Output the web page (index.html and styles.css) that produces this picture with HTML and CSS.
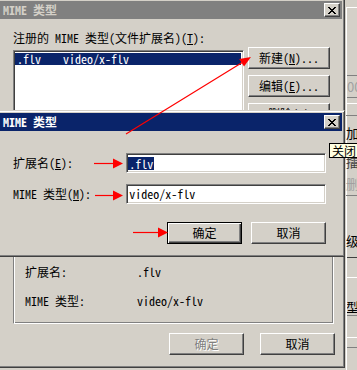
FILE: index.html
```html
<!DOCTYPE html>
<html lang="zh-CN">
<head>
  <meta charset="UTF-8">
  <link rel="stylesheet" href="styles.css">
  <title>MIME 类型</title>
</head>
<body>
<div class="desk">
  <div class="win main">
    <div class="titlebar inactive">
      <span>MIME 类型</span>
      <span class="xbtn">
        <svg width="8" height="7" viewBox="0 0 8 7"><path d="M0 0h2v1H0zM6 0h2v1H6zM1 1h2v1H1zM5 1h2v1H5zM2 2h4v1H2zM3 3h2v1H3zM2 4h4v1H2zM1 5h2v1H1zM5 5h2v1H5zM0 6h2v1H0zM6 6h2v1H6z" fill="#000"/></svg>
      </span>
    </div>
    <div class="main-body">
      <div class="top-row">
        <div class="list-col">
          <div class="lbl">注册的 MIME 类型(文件扩展名)(<u>T</u>):</div>
          <div class="listbox">
            <div class="list-row sel"><span class="ext">.flv</span><span>video/x-flv</span></div>
          </div>
        </div>
        <div class="btn-col">
          <div class="btn">新建(<u>N</u>)...</div>
          <div class="btn">编辑(<u>E</u>)...</div>
          <div class="btn">删除(<u>R</u>)</div>
        </div>
      </div>
      <div class="groupbox">
        <div class="detail"><span class="dlabel">扩展名:</span><span>.flv</span></div>
        <div class="detail second"><span class="dlabel">MIME 类型:</span><span>video/x-flv</span></div>
      </div>
      <div class="foot">
        <div class="btn wide disabled">确定</div>
        <div class="btn wide">取消</div>
      </div>
    </div>
  </div>

  <div class="backwin">
    <div class="bw-frame">
      <div class="bw a"></div>
      <div class="bw b"><span class="dim">00</span></div>
      <div class="bw c"></div>
      <div class="bw d"></div>
      <div class="bw e">加</div>
      <div class="bw f"><span class="bw-t1">擂</span><span class="dim bw-t2">删</span></div>
      <div class="bw g">级</div>
      <div class="bw h"></div>
      <div class="bw i"><span class="cut">类型</span></div>
      <div class="bw j"></div>
      <div class="bw k"></div>
      <div class="bw l"></div>
    </div>
  </div>
</div>

<div class="win dlg">
  <div class="titlebar active">
    <span>MIME 类型</span>
    <span class="xbtn">
      <svg width="8" height="7" viewBox="0 0 8 7"><path d="M0 0h2v1H0zM6 0h2v1H6zM1 1h2v1H1zM5 1h2v1H5zM2 2h4v1H2zM3 3h2v1H3zM2 4h4v1H2zM1 5h2v1H1zM5 5h2v1H5zM0 6h2v1H0zM6 6h2v1H6z" fill="#000"/></svg>
    </span>
  </div>
  <div class="dlg-body">
    <div class="frow">
      <span class="flabel">扩展名(<u>E</u>):</span>
      <div class="edit"><span class="selected">.flv</span></div>
    </div>
    <div class="frow second">
      <span class="flabel">MIME 类型(<u>M</u>):</span>
      <div class="edit">video/x-flv</div>
    </div>
    <div class="dlg-foot">
      <div class="btn wide default">确定</div>
      <div class="btn wide">取消</div>
    </div>
  </div>
</div>

<div class="tooltip">关闭</div>

<svg class="marks" width="357" height="370" viewBox="0 0 357 370">
  <g stroke="#ff0000" stroke-width="1.2" fill="none">
    <line x1="94" y1="163.5" x2="115" y2="163.5"/>
    <line x1="95" y1="195.5" x2="115" y2="195.5"/>
    <line x1="133" y1="232.5" x2="160" y2="232.5"/>
    <line x1="126" y1="134" x2="243" y2="62"/>
  </g>
  <g fill="#ff0000">
    <polygon points="113,158.5 123,163.5 113,168.5"/>
    <polygon points="113,190.5 123,195.5 113,200.5"/>
    <polygon points="158,227.5 168,232.5 158,237.5"/>
    <polygon points="251,57 244,66.6 239.2,59"/>
  </g>
</svg>
</body>
</html>
```

FILE: styles.css
```css
body {
  margin: 0;
  width: 357px;
  height: 370px;
  overflow: hidden;
  position: relative;
  background: #d4d0c8;
  font-family: "Noto Sans Mono CJK SC", "Noto Sans CJK SC", monospace;
  font-size: 12px;
  line-height: 12px;
  color: #000;
}

u {
  text-decoration: underline;
  text-underline-offset: 1px;
}

.desk {
  display: flex;
  margin: -2px 0 0 -3px;
}

/* classic window frame */
.win {
  box-sizing: border-box;
  border: 1px solid;
  border-color: #d4d0c8 #404040 #404040 #d4d0c8;
  box-shadow: inset 1px 1px #fff, inset -1px -1px #808080;
  padding: 2px;
  background: #d4d0c8;
  display: flex;
  flex-direction: column;
}

.main {
  width: 348px;
  height: 370px;
  flex: none;
}

.titlebar {
  height: 18px;
  flex: none;
  display: flex;
  align-items: center;
  justify-content: space-between;
  padding-left: 3px;
  font-weight: bold;
}

.titlebar.inactive {
  background: #808080;
  color: #d4d0c8;
}

.titlebar.active {
  background: #0a246a;
  color: #fff;
}

.xbtn {
  width: 16px;
  height: 14px;
  box-sizing: border-box;
  margin-right: 2px;
  display: flex;
  align-items: center;
  justify-content: center;
  background: #d4d0c8;
  border: 1px solid;
  border-color: #fff #404040 #404040 #fff;
  box-shadow: inset -1px -1px #808080;
}

.xbtn svg {
  display: block;
}

.btn {
  box-sizing: border-box;
  height: 22px;
  display: flex;
  align-items: center;
  justify-content: center;
  background: #d4d0c8;
  border: 1px solid;
  border-color: #fff #404040 #404040 #fff;
  box-shadow: inset -1px -1px #808080;
  white-space: nowrap;
}

.btn.wide {
  width: 75px;
}

.btn.default {
  border-color: #000;
  box-shadow: inset 1px 1px #fff, inset -1px -1px #404040, inset -2px -2px #808080;
}

.btn.disabled {
  color: #808080;
  text-shadow: 1px 1px #fff;
}

/* outer dialog */
.main-body {
  padding: 0 0 10px 13px;
  display: flex;
  flex-direction: column;
}

.top-row {
  display: flex;
}

.list-col {
  width: 231px;
}

.lbl {
  margin-top: 13px;
  white-space: nowrap;
}

.listbox {
  box-sizing: border-box;
  margin-top: 6px;
  height: 178px;
  background: #fff;
  border: 1px solid;
  border-color: #808080 #fff #fff #808080;
  box-shadow: inset 1px 1px #404040, inset -1px -1px #d4d0c8;
  padding: 2px 2px 2px 1px;
}

.list-row {
  height: 12px;
  padding-left: 2px;
  display: flex;
  white-space: pre;
}

.list-row.sel {
  background: #0a246a;
  color: #fff;
}

.ext {
  width: 46px;
}

.btn-col {
  width: 82px;
  margin-left: 4px;
  padding-top: 28px;
  display: flex;
  flex-direction: column;
  gap: 6px;
}

.groupbox {
  box-sizing: border-box;
  width: 321px;
  height: 84px;
  margin-top: 12px;
  padding: 25px 0 0 11px;
  border: 1px solid;
  border-color: #808080 #fff #fff #808080;
  box-shadow: inset 1px 1px #fff, inset -1px -1px #808080;
}

.detail {
  display: flex;
}

.detail.second {
  margin-top: 17px;
}

.dlabel {
  width: 112px;
}

.foot {
  margin-top: 9px;
  padding-right: 7px;
  display: flex;
  justify-content: flex-end;
  gap: 16px;
}

/* window behind, right edge */
.backwin {
  width: 12px;
  flex: none;
  overflow: hidden;
  font-family: "Noto Sans CJK SC", sans-serif;
  font-size: 13px;
  line-height: 13px;
}

.bw-frame {
  margin-top: 9px;
  margin-left: 1px;
  border-top: 1px solid #fff;
  border-left: 1px solid #fff;
}

.bw {
  box-sizing: border-box;
  overflow: hidden;
  white-space: nowrap;
}

.bw.a { height: 67px; }
.bw.b { height: 22px; border-top: 1px solid #808080; padding-top: 4px; }
.bw.c { height: 6px; border-top: 1px solid #808080; }
.bw.d { height: 12px; border-top: 1px solid #fff; }
.bw.e { height: 35px; border-top: 1px solid #808080; padding-top: 10px; margin-left: -1px; }
.bw.f { height: 45px; display: flex; flex-direction: column; margin-left: -1px; }
.bw.g { height: 62px; border-top: 1px solid #808080; padding-top: 38px; margin-left: -1px; }
.bw.h { height: 20px; border-top: 1px solid #404040; }
.bw.i { height: 38px; border-top: 1px solid #fff; padding-top: 22px; }
.bw.j { height: 22px; border-top: 1px solid #808080; }
.bw.k { height: 10px; border-top: 1px solid #fff; }
.bw.l { height: 40px; border-top: 1px solid #808080; }

.bw-t1 {
  margin-top: 5px;
  color: #404040;
}

.bw-t2 {
  margin-top: 9px;
}

.dim {
  color: #a0a0a0;
}

.cut {
  display: block;
  margin-left: -14px;
}

/* active dialog on top */
.dlg {
  position: absolute;
  left: -3px;
  top: 110px;
  width: 348px;
  height: 147px;
}

.dlg-body {
  padding: 22px 16px 0 13px;
}

.frow {
  display: flex;
  align-items: center;
  height: 20px;
}

.frow.second {
  margin-top: 11px;
}

.flabel {
  width: 115px;
  white-space: nowrap;
}

.edit {
  box-sizing: border-box;
  width: 203px;
  height: 20px;
  padding: 0 2px;
  display: flex;
  align-items: center;
  background: #fff;
  border: 1px solid;
  border-color: #808080 #fff #fff #808080;
  box-shadow: inset 1px 1px #404040, inset -1px -1px #d4d0c8;
}

.selected {
  margin-left: -1px;
  padding: 1px 1px 0;
  background: #0a246a;
  color: #fff;
}

.dlg-foot {
  margin-top: 18px;
  display: flex;
  justify-content: flex-end;
  gap: 9px;
}

.tooltip {
  position: absolute;
  left: 329px;
  top: 143px;
  padding: 1px 2px 0;
  background: #ffffe1;
  border: 1px solid #000;
  white-space: nowrap;
}

.marks {
  position: absolute;
  left: 0;
  top: 0;
  pointer-events: none;
}
```
